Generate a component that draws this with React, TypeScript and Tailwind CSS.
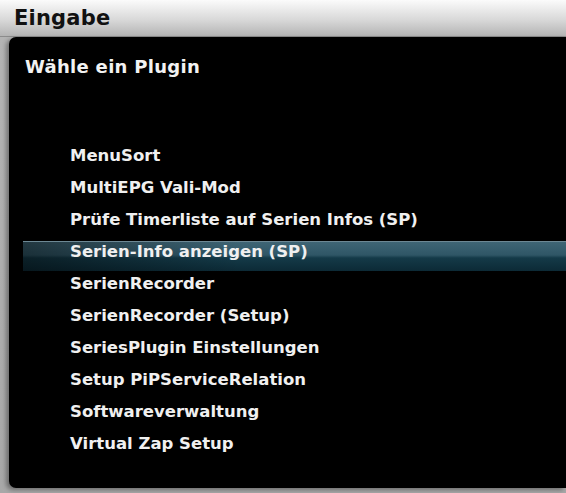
const plugins = [
  "MenuSort",
  "MultiEPG Vali-Mod",
  "Prüfe Timerliste auf Serien Infos (SP)",
  "Serien-Info anzeigen (SP)",
  "SerienRecorder",
  "SerienRecorder (Setup)",
  "SeriesPlugin Einstellungen",
  "Setup PiPServiceRelation",
  "Softwareverwaltung",
  "Virtual Zap Setup",
]

const selected = 3

export default function App() {
  return (
    <div
      className="flex h-[493px] w-[566px] flex-col overflow-hidden bg-[linear-gradient(180deg,#fbfbfb_0px,#d8d8d8_20px,#b4b4b4_36px,#a8a8a8_100%)]"
      style={{ fontFamily: '"DejaVu Sans", "Liberation Sans", sans-serif' }}
    >
      {/* header */}
      <div className="flex h-[37px] items-center border-b border-[#8c8c8c] pl-[14px]">
        <h1 className="text-[21px] font-bold leading-none tracking-[0.2px] text-[#111]">Eingabe</h1>
      </div>

      {/* panel */}
      <div className="ml-[9px] flex h-[451px] flex-col rounded-l-[7px] bg-black shadow-[-3px_2px_4px_rgba(0,0,0,0.35)]">
        <p className="pl-[16px] pt-[21px] text-[18px] font-bold leading-none tracking-[0.3px] text-[#f2f2f2]">
          Wähle ein Plugin
        </p>

        <ul className="mt-[64px] flex flex-col">
          {plugins.map((name, i) =>
            i === selected ? (
              <li
                key={name}
                className="mt-[5px] -mb-[3px] ml-[14px] flex h-[30px] items-center border-t border-[#6d8894] pb-[8px] pl-[47px] text-[16.5px] font-bold text-[#f0f0f0] bg-[linear-gradient(90deg,rgba(0,0,0,0.45)_0%,rgba(0,0,0,0)_40%),linear-gradient(180deg,#3f6575_0%,#2f5666_45%,#143a48_55%,#0c2a36_100%)]"
              >
                {name}
              </li>
            ) : (
              <li
                key={name}
                className="flex h-[32px] items-center pl-[61px] text-[16.5px] font-bold text-[#f0f0f0]"
              >
                {name}
              </li>
            )
          )}
        </ul>
      </div>
    </div>
  )
}
